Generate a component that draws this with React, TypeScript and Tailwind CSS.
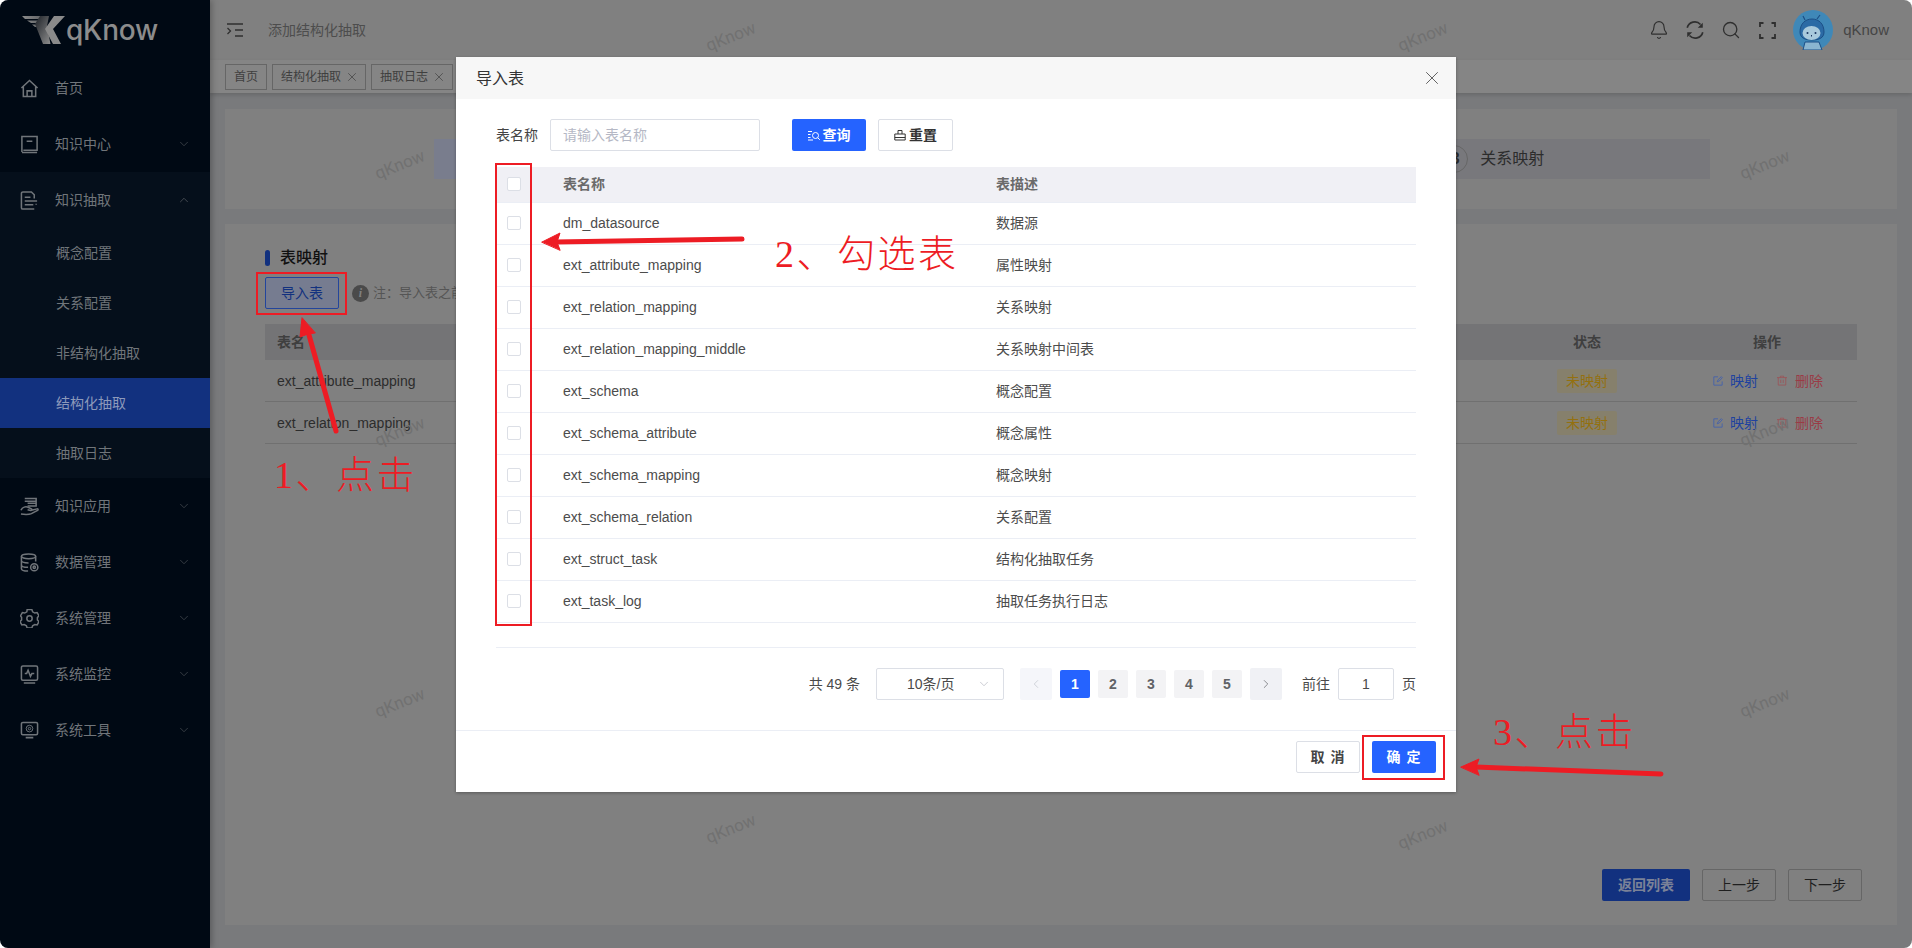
import { Bell, ChevronDown, ChevronLeft, ChevronRight, ChevronUp, Search, X } from "lucide-react";
import type { ReactNode } from "react";

const mono = "h-[19px] w-[19px] fill-none stroke-[#70757a] stroke-[1.6]";

function HomeIcon() {
  return (
    <svg viewBox="0 0 20 20" className={mono}>
      <path d="M1.5 9.5 10 1.5l8.5 8M3.5 8v10.5h13V8M7.5 18.5v-6h5v6" />
    </svg>
  );
}

function BookIcon() {
  return (
    <svg viewBox="0 0 20 20" className={mono}>
      <path d="M2 18V1.5h16v14.5H3.5M2 18.5h16M7 6.5h6" />
    </svg>
  );
}

function DocIcon() {
  return (
    <svg viewBox="0 0 20 20" className={mono}>
      <path d="M15 8V4l-3-3H3a1.5 1.5 0 0 0-1.5 1.5v15A1.5 1.5 0 0 0 3 19h12M5 6.5h6M5 10.5h13M5 14.5h9M17 14.5v-1" />
    </svg>
  );
}

function HandIcon() {
  return (
    <svg viewBox="0 0 20 20" className={mono}>
      <path d="M5 1.5h12v5H8M5 4.5h12v5H8" />
      <path d="M1 14c1.5-3.5 5-4.500 8-3l3 1.500c1 .6.4 2-.8 1.800L8 13.500M12 14l6-1.500c1-.2 1.400 1 .5 1.600L12 17.500c-3 1.300-7 1-11 .5" />
    </svg>
  );
}

function DatabaseIcon() {
  return (
    <svg viewBox="0 0 20 20" className={mono}>
      <ellipse cx="9" cy="3.500" rx="7.500" ry="2.500" />
      <path d="M1.500 3.500v13c0 1.400 3 2.500 7 2.500M16.500 3.500V9M1.500 8c0 1.400 3 2.500 7.500 2.500M1.500 12.500c0 1.400 3 2.500 7 2.500" />
      <circle cx="15" cy="15" r="3.800" />
      <circle cx="15" cy="15" r="1.200" />
    </svg>
  );
}

function GearIcon() {
  return (
    <svg viewBox="0 0 20 20" className={mono}>
      <path d="M7.500 1.500h5l.8 2.400 2.300 1.300 2.500-.5 2 3.500-1.700 1.800v2.600l1.700 1.800-2 3.500-2.500-.5-2.300 1.300-.8 2.400h-5l-.8-2.400-2.300-1.300-2.500.5-2-3.500 1.700-1.800V9.800L.4 8.200l2-3.500 2.500.5 2.300-1.300z" transform="translate(.1 -.9) scale(.99 .99)" />
      <circle cx="10" cy="10" r="2.800" />
    </svg>
  );
}

function PulseIcon() {
  return (
    <svg viewBox="0 0 20 20" className={mono}>
      <path d="M3 1h14a1.500 1.500 0 0 1 1.500 1.500v12A1.500 1.500 0 0 1 17 16H3a1.500 1.500 0 0 1-1.500-1.500v-12A1.500 1.500 0 0 1 3 1zM4 19h12M5 9h2l1.500-3.500L11 12l1.500-3H15" />
    </svg>
  );
}

function ScreenGearIcon() {
  return (
    <svg viewBox="0 0 20 20" className={mono}>
      <path d="M3 1.500h14A1.500 1.500 0 0 1 18.500 3v10a1.500 1.500 0 0 1-1.500 1.500H3A1.500 1.500 0 0 1 1.500 13V3A1.500 1.500 0 0 1 3 1.500zM6 17.500h8" />
      <circle cx="10" cy="8" r="3.500" strokeWidth="1" />
      <circle cx="10" cy="8" r="1.300" strokeWidth="1" />
    </svg>
  );
}

function Logo() {
  return (
    <div className="flex h-[60px] items-center pl-5">
      <svg viewBox="0 0 46 30" className="h-[30px] w-[46px]">
        <defs>
          <linearGradient id="stem" x1="0" y1="0" x2="1" y2="1">
            <stop offset="0" stopColor="#1c2026" />
            <stop offset="1" stopColor="#8d8d8d" />
          </linearGradient>
          <linearGradient id="wing" x1="0" y1="0" x2="1" y2="0">
            <stop offset="0" stopColor="#8a8a8a" />
            <stop offset="1" stopColor="#55585c" />
          </linearGradient>
        </defs>
        <path d="M2 1h26l-1 3H5zM7 5.500h19l-1 2.500H11zM12 9.500h12l-1 2.500h-8z" fill="url(#wing)" />
        <path d="M20 1h9l-2 10 3.500 18H23L15 9z" fill="url(#stem)" />
        <path d="M45 1H34L25 14l8 15h8l-8-15z" fill="#8a8a8a" />
      </svg>
      <span className="text-[28px] font-medium tracking-[-0.2px] text-[#8c8c8c] [font-family:Inter,sans-serif]">qKnow</span>
    </div>
  );
}

function NavItem({ icon, label, open }: { icon: ReactNode; label: string; open?: boolean }) {
  return (
    <div className={`flex h-14 items-center pl-5 pr-[19px] ${open ? "bg-[#050f1b]" : ""}`}>
      <span className="flex w-[35px]">{icon}</span>
      <span className="flex-1 text-sm text-[#70757a]">{label}</span>
      {open ? <ChevronUp className="h-[14px] w-[14px] text-[#5b6066]" strokeWidth={1.2} /> : <ChevronDown className="h-[14px] w-[14px] text-[#4b5056]" strokeWidth={1.2} />}
    </div>
  );
}

function Sidebar() {
  const subs = ["概念配置", "关系配置", "非结构化抽取", "结构化抽取", "抽取日志"];
  return (
    <aside className="z-10 w-[210px] shrink-0 bg-[#000914] shadow-[2px_0_6px_rgba(0,0,0,0.25)]">
      <Logo />
      <div className="flex h-14 items-center pl-5">
        <span className="flex w-[35px]"><HomeIcon /></span>
        <span className="text-sm text-[#70757a]">首页</span>
      </div>
      <NavItem icon={<BookIcon />} label="知识中心" />
      <NavItem icon={<DocIcon />} label="知识抽取" open />
      <div className="bg-[#050f1b]">
        {subs.map((s) => (
          <div key={s} className={`flex h-[50px] items-center pl-14 text-sm ${s === "结构化抽取" ? "bg-[#12317f] text-[#8d9abb]" : "text-[#70757a]"}`}>
            {s}
          </div>
        ))}
      </div>
      <NavItem icon={<HandIcon />} label="知识应用" />
      <NavItem icon={<DatabaseIcon />} label="数据管理" />
      <NavItem icon={<GearIcon />} label="系统管理" />
      <NavItem icon={<PulseIcon />} label="系统监控" />
      <NavItem icon={<ScreenGearIcon />} label="系统工具" />
    </aside>
  );
}

function Avatar() {
  return (
    <svg viewBox="0 0 40 40" className="h-10 w-10">
      <circle cx="20" cy="20" r="20" fill="#3f88b8" />
      <path d="M12 10 10 6M24 9l3-4" stroke="#1c4f86" strokeWidth="1.200" fill="none" />
      <path d="M7 22c0-8 5-13 12-13s12 5 12 13c0 6-5 8-12 8S7 28 7 22z" fill="#2b6aa5" stroke="#1c4f86" />
      <ellipse cx="18.500" cy="23" rx="9" ry="7" fill="#a9c9dc" />
      <circle cx="14.500" cy="23" r="1" fill="#1c3560" />
      <circle cx="22.500" cy="23" r="1" fill="#1c3560" />
      <path d="M18.500 25v1.500" stroke="#1c3560" />
      <path d="M12 32h14l3 8H10z" fill="#8ab5d0" stroke="#1c4f86" />
    </svg>
  );
}

function Header() {
  return (
    <div className="flex h-[60px] shrink-0 items-center bg-[#808080] pl-[17px] pr-[23px]">
      <svg viewBox="0 0 16 14" className="h-[14px] w-4 fill-none stroke-[#2f2f2f] stroke-[1.3]">
        <path d="M0 1h16M8 7h8M8 13h8M.5 5l3 3-3 3" />
      </svg>
      <span className="ml-[25px] text-sm text-[#4d4d4d]">添加结构化抽取</span>
      <div className="ml-auto flex items-center">
        <Bell className="h-5 w-5 text-[#2f2f2f]" strokeWidth={1.4} />
        <svg viewBox="0 0 18 18" className="ml-4 h-5 w-5 fill-none stroke-[#2f2f2f] stroke-[1.5]">
          <path d="M2 7a7 7 0 0 1 12-3M16 11a7 7 0 0 1-12 3" />
          <path d="M16 2.500v4.500h-4.500zM2 15.500V11h4.500z" fill="#2f2f2f" stroke="none" />
        </svg>
        <Search className="ml-4 h-5 w-5 text-[#2f2f2f]" strokeWidth={1.6} />
        <span className="ml-4 flex h-5 w-5 items-center justify-center">
          <svg viewBox="0 0 17 17" className="h-[17px] w-[17px] fill-none stroke-[#2f2f2f] stroke-[1.8]">
            <path d="M1 5V1h3.500M12.500 1H16v4M16 12v4h-3.500M4.500 16H1v-4" />
          </svg>
        </span>
        <span className="ml-4"><Avatar /></span>
        <span className="ml-[10px] text-[15px] text-[#454545]">qKnow</span>
      </div>
    </div>
  );
}

function Tag({ label, close }: { label: string; close?: boolean }) {
  return (
    <div className="flex h-[26px] items-center gap-1 border border-[#666] px-2 text-xs text-[#3f3f3f]">
      {label}
      {close && <X className="h-[14px] w-[14px] -mr-[2px]" strokeWidth={1.2} />}
    </div>
  );
}

function Watermark({ x, y }: { x: number; y: number }) {
  return (
    <span className="absolute -translate-x-1/2 -translate-y-1/2 -rotate-[22deg] text-[17px] text-[#717171] [font-family:Roboto,sans-serif]" style={{ left: x, top: y }}>
      qKnow
    </span>
  );
}

function Content() {
  return (
    <div className="flex min-h-0 flex-1 flex-col gap-[15px] bg-[#797a7c] px-[15px] pb-[23px] pt-4">
      <div className="flex h-[100px] shrink-0 items-center bg-[#808080] pl-[209px] pr-[187px]">
        <div className="flex h-10 w-full text-[#2c2c2c]">
          <div className="flex-1 bg-[#797d8d]" />
          <div className="flex-1 bg-[#78787c]" />
          <div className="flex flex-1 items-center justify-center gap-3 bg-[#78787c] pr-[6px]">
            <span className="flex h-7 w-7 items-center justify-center rounded-full border border-[#666] pl-[2px] text-base font-bold">3</span>
            <span className="text-base">关系映射</span>
          </div>
        </div>
      </div>
      <div className="flex min-h-0 flex-1 flex-col bg-[#808080] pb-6 pl-10 pr-[35px] pt-[26px]">
        <div className="mr-[5px] flex h-4 items-center">
          <span className="h-4 w-[5px] rounded-full bg-[#12317f]" />
          <span className="ml-[10px] text-base font-medium text-[#111]">表映射</span>
        </div>
        <div className="mt-[11px] flex items-center">
          <div className="flex h-8 w-[74px] items-center justify-center rounded-[2px] border border-[#23459c] bg-[#767c90] text-sm text-[#12317f]">导入表</div>
          <span className="ml-[13px] flex h-[17px] w-[17px] items-center justify-center rounded-full bg-[#4a4a4a] text-xs font-bold italic text-[#808080] [font-family:'Liberation_Serif',serif]">i</span>
          <span className="ml-1 text-[13px] text-[#555]">注：导入表之前请先配置好数据源</span>
        </div>
        <div className="mr-[5px] mt-[15px]">
          <div className="grid h-9 grid-cols-[1fr_180px_180px] items-center bg-[#747476] pb-px text-sm font-bold text-[#3f3f3f]">
            <span className="pl-3">表名</span>
            <span className="text-center">状态</span>
            <span className="text-center">操作</span>
          </div>
          {["ext_attribute_mapping", "ext_relation_mapping"].map((n) => (
            <div key={n} className="grid h-[42px] grid-cols-[1fr_180px_180px] items-center border-b border-[#707070] text-sm text-[#2c2c2c]">
              <span className="pl-3">{n}</span>
              <span className="flex justify-center">
                <span className="flex h-6 w-[60px] items-center justify-center rounded-[2px] bg-[#86806c] text-[#94700f]">未映射</span>
              </span>
              <span className="flex items-center justify-center pl-[2px]">
                <svg viewBox="0 0 12 12" className="h-[10px] w-[10px] fill-none stroke-[#4a64a8] stroke-[1.2]">
                  <path d="M11 6.500V11H1V1h5M5 7l1-2.500L10 .8l1.200 1.200L7.500 6z" />
                </svg>
                <span className="ml-[7px] text-[#1e429f]">映射</span>
                <svg viewBox="0 0 12 12" className="ml-[19px] h-[11px] w-[10px] fill-none stroke-[#9b5458] stroke-[1]">
                  <path d="M0 2.500h12M4 2.500V.8h4v1.700M1.500 2.500V11.500h9V2.500M4.500 5v4M7.500 5v4" />
                </svg>
                <span className="ml-2 text-[#9a3b46]">删除</span>
              </span>
            </div>
          ))}
        </div>
        <div className="mt-auto flex justify-end gap-3 text-sm">
          <div className="flex h-8 w-[88px] items-center justify-center rounded-[2px] bg-[#12317f] font-bold text-[#7b8298]">返回列表</div>
          <div className="flex h-8 w-[74px] items-center justify-center rounded-[2px] border border-[#666] text-[#1f1f1f]">上一步</div>
          <div className="flex h-8 w-[74px] items-center justify-center rounded-[2px] border border-[#666] text-[#1f1f1f]">下一步</div>
        </div>
      </div>
    </div>
  );
}

const tables = [
  ["dm_datasource", "数据源"],
  ["ext_attribute_mapping", "属性映射"],
  ["ext_relation_mapping", "关系映射"],
  ["ext_relation_mapping_middle", "关系映射中间表"],
  ["ext_schema", "概念配置"],
  ["ext_schema_attribute", "概念属性"],
  ["ext_schema_mapping", "概念映射"],
  ["ext_schema_relation", "关系配置"],
  ["ext_struct_task", "结构化抽取任务"],
  ["ext_task_log", "抽取任务执行日志"],
];

function Checkbox() {
  return <span className="block h-[14px] w-[14px] rounded-[2px] border border-[#dcdfe6] bg-white" />;
}

function Pagination() {
  return (
    <div className="mt-5 flex h-8 items-center justify-end text-sm text-[#4a4a4a]">
      <span>共 49 条</span>
      <div className="ml-4 flex h-8 w-32 items-center rounded-[2px] border border-[#dcdfe6] pl-[30px] pr-3">
        <span className="flex-1">10条/页</span>
        <ChevronDown className="h-[14px] w-[14px] text-[#b5b8c0]" strokeWidth={1.2} />
      </div>
      <div className="ml-4 flex h-8 w-8 items-center justify-center rounded-[2px] bg-[#f5f6fa] text-[#c0c4cc]">
        <ChevronLeft className="h-[14px] w-[14px]" strokeWidth={1.2} />
      </div>
      <div className="ml-2 flex items-center gap-2 font-bold">
        {[1, 2, 3, 4, 5].map((p) => (
          <span key={p} className={`flex h-7 w-[30px] items-center justify-center rounded-[2px] ${p === 1 ? "bg-[#2563ff] text-white" : "bg-[#f3f3f5] text-[#606266]"}`}>
            {p}
          </span>
        ))}
      </div>
      <div className="ml-2 flex h-8 w-8 items-center justify-center rounded-[2px] bg-[#f0f1f5] text-[#606266]">
        <ChevronRight className="h-[14px] w-[14px]" strokeWidth={1.2} />
      </div>
      <span className="ml-5">前往</span>
      <div className="ml-2 flex h-8 w-14 items-center justify-center rounded-[2px] border border-[#dcdfe6]">1</div>
      <span className="ml-2">页</span>
    </div>
  );
}

function Dialog() {
  return (
    <div className="absolute left-[456px] top-[57px] z-20 flex h-[735px] w-[1000px] flex-col bg-white shadow-[0_1px_3px_rgba(0,0,0,0.3)]">
      <div className="flex h-[42px] shrink-0 items-center justify-between bg-[#f7f7f7] pl-5 pr-[13px]">
        <span className="pt-px text-base text-[#333]">导入表</span>
        <X className="-mt-[1px] h-[22px] w-[22px] text-[#444]" strokeWidth={0.9} />
      </div>
      <div className="px-10">
        <div className="mt-5 flex h-8 items-center">
          <span className="text-sm text-[#444]">表名称</span>
          <div className="ml-3 flex h-8 w-[210px] items-center rounded-[2px] border border-[#dcdfe6] pl-3 text-sm text-[#b5b8c5]">请输入表名称</div>
          <div className="ml-8 flex h-8 w-[74px] items-center justify-center gap-[3px] rounded-[2px] bg-[#2563ff] text-sm font-bold text-white">
            <svg viewBox="0 0 12 12" className="h-3 w-3 fill-none stroke-white stroke-[1]">
              <path d="M0 2.500h4M0 5.500h2.500M0 8.500h2.500M0 11h5" />
              <circle cx="7.500" cy="6.500" r="3" />
              <path d="m9.800 8.800 2 2" />
            </svg>
            查询
          </div>
          <div className="ml-3 flex h-8 w-[75px] items-center justify-center gap-[3px] rounded-[2px] border border-[#dcdfe6] text-sm font-bold text-[#333]">
            <svg viewBox="0 0 12 12" className="h-3 w-3 fill-none stroke-[#333] stroke-[1]">
              <path d="M4 5V1.500h4V5M.8 5h10.400v6H.8zM.8 8.500h10.400" />
            </svg>
            重置
          </div>
        </div>
        <div className="mt-4">
          <div className="grid h-9 grid-cols-[54px_433px_1fr] items-center border-b border-[#ebeef5] bg-[#f0f0f5] pb-px text-sm font-bold text-[#6a6a6a]">
            <span className="pl-[11px]"><Checkbox /></span>
            <span className="pl-[13px]">表名称</span>
            <span className="pl-[13px]">表描述</span>
          </div>
          {tables.map(([name, desc]) => (
            <div key={name} className="grid h-[42px] grid-cols-[54px_433px_1fr] items-center border-b border-[#ebeef5] pb-px text-sm text-[#4c4c4c]">
              <span className="pl-[11px]"><Checkbox /></span>
              <span className="pl-[13px]">{name}</span>
              <span className="pl-[13px]">{desc}</span>
            </div>
          ))}
        </div>
        <div className="mt-6 border-t border-[#ebeef5]" />
        <Pagination />
      </div>
      <div className="mt-[30px] flex flex-1 justify-end gap-3 border-t border-[#ebeef5] pr-5 pt-[10px]">
        <div className="flex h-8 w-16 items-center justify-center rounded-[2px] border border-[#dcdfe6] text-sm font-bold tracking-[1px] text-[#444]">取 消</div>
        <div className="flex h-8 w-16 items-center justify-center rounded-[2px] bg-[#2563ff] text-sm font-bold tracking-[1px] text-white">确 定</div>
      </div>
    </div>
  );
}

function Annotations() {
  const serif = "absolute z-30 whitespace-pre font-light text-[38px] leading-[48px] tracking-[2.5px] text-[#ed1c24] [font-family:'Liberation_Serif','Noto_Sans_CJK_SC',serif]";
  return (
    <>
      <span className={`${serif} left-[274px] top-[451px]`}>1、点击</span>
      <span className={`${serif} left-[775px] top-[230px]`}>2、勾选表</span>
      <span className={`${serif} left-[1493px] top-[708px]`}>3、点击</span>
      <div className="absolute left-[256px] top-[272px] z-30 h-[43px] w-[91px] border-2 border-[#ed1c24]" />
      <div className="absolute left-[495px] top-[163px] z-30 h-[463px] w-[37px] border-2 border-[#ed1c24]" />
      <div className="absolute left-[1362px] top-[735px] z-30 h-[45px] w-[83px] border-2 border-[#ed1c24]" />
      <svg viewBox="0 0 1912 948" className="pointer-events-none absolute left-0 top-0 z-30 h-[948px] w-[1912px]">
        <g fill="#ed1c24" stroke="#ed1c24" strokeLinecap="round">
          <path d="M336 431 309 335" strokeWidth="5" fill="none" />
          <path d="M302 318 300 337 308 334 315 333z" strokeWidth="1" />
          <path d="M742 239 555 242" strokeWidth="5" fill="none" />
          <path d="M542 242 560 233 557 242 560 250z" strokeWidth="1" />
          <path d="M1661 774 1476 767" strokeWidth="5" fill="none" />
          <path d="M1461 767 1479 759 1476 767 1479 775z" strokeWidth="1" />
        </g>
      </svg>
    </>
  );
}

export default function App() {
  const marks = [
    [400, 165],
    [400, 432],
    [400, 703],
    [731, 37],
    [731, 829],
    [1423, 37],
    [1423, 835],
    [1765, 165],
    [1765, 432],
    [1765, 703],
  ];
  return (
    <div className="h-[948px] w-[1912px] bg-white [font-family:'Liberation_Sans','Noto_Sans_CJK_SC',sans-serif]">
      <div className="relative flex h-full w-full overflow-hidden rounded-[8px]">
        <Sidebar />
        <main className="flex min-w-0 flex-1 flex-col">
          <Header />
          <div className="z-[1] flex h-[33px] shrink-0 items-start gap-[5px] bg-[#858585] pl-[15px] pt-1 shadow-[0_2px_4px_rgba(0,0,0,0.15)]">
            <Tag label="首页" />
            <Tag label="结构化抽取" close />
            <Tag label="抽取日志" close />
          </div>
          <Content />
        </main>
        {marks.map(([x, y]) => (
          <Watermark key={`${x}-${y}`} x={x} y={y} />
        ))}
        <Dialog />
        <Annotations />
      </div>
    </div>
  );
}
